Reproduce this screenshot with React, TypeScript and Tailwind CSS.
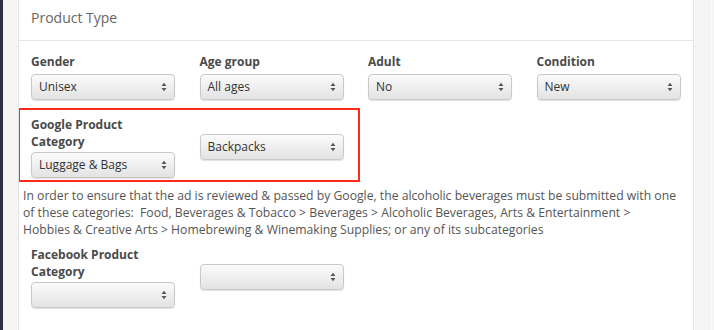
import type { ReactNode } from 'react'

const font = { fontFamily: '"Open Sans", "Liberation Sans", sans-serif' }

function Select({ value }: { value?: string }) {
  return (
    <div className="relative flex h-[26px] w-[144px] shrink-0 items-center rounded-[4px] border border-[#c9c9c9] bg-linear-to-b from-[#fbfbfb] to-[#e3e3e3] pl-[7px] text-[12px] text-[#333] shadow-[0_1px_1px_rgba(0,0,0,0.12)]">
      <span>{value}</span>
      <svg className="absolute right-[7px] top-1/2 -translate-y-1/2" width="6" height="10" viewBox="0 0 6 10">
        <path d="M3 0.8 L5.4 4 L0.6 4 Z" fill="#555" />
        <path d="M3 9.2 L5.4 6 L0.6 6 Z" fill="#555" />
      </svg>
    </div>
  )
}

function Field({ label, children }: { label: ReactNode; children: ReactNode }) {
  return (
    <div className="flex w-[168.5px] shrink-0 flex-col">
      <div className="mb-[2px] text-[12px] font-bold leading-[17px] text-[#4a4a4a]">{label}</div>
      {children}
    </div>
  )
}

export default function App() {
  return (
    <div className="flex h-[330px] w-[714px] overflow-hidden bg-[#f5f5f5]" style={font}>
      <div className="w-[3px] shrink-0 bg-[#2c3040]" />
      <div className="w-[15px] shrink-0" />
      <div className="flex w-[676px] shrink-0 flex-col overflow-hidden border-x border-[#e3e3e3] bg-white">
        <div className="flex h-[41px] shrink-0 items-center border-b border-[#e6e6e6] pb-[6px] pl-[12px] text-[14px] text-[#666]">
          Product Type
        </div>
        <div className="flex flex-col pl-[12px] pt-[12px]">
          <div className="flex">
            <Field label="Gender">
              <div className="mt-[2px]">
                <Select value="Unisex" />
              </div>
            </Field>
            <Field label="Age group">
              <div className="mt-[2px]">
                <Select value="All ages" />
              </div>
            </Field>
            <Field label="Adult">
              <div className="mt-[2px]">
                <Select value="No" />
              </div>
            </Field>
            <Field label="Condition">
              <div className="mt-[2px]">
                <Select value="New" />
              </div>
            </Field>
          </div>
          <div className="-ml-[13px] mt-[8px] flex w-[342px] items-center border-2 border-[#ff2a1a] pb-[2px] pl-[11px] pt-[6px]">
            <Field label={<>Google Product<br />Category</>}>
              <Select value="Luggage & Bags" />
            </Field>
            <Select value="Backpacks" />
          </div>
          <p className="-ml-[8px] mt-[5px] whitespace-nowrap text-[12.2px] leading-[17px] text-[#555]">
            In order to ensure that the ad is reviewed &amp; passed by Google, the alcoholic beverages must be submitted with one
            <br />
            of these categories:&nbsp; Food, Beverages &amp; Tobacco &gt; Beverages &gt; Alcoholic Beverages, Arts &amp; Entertainment &gt;
            <br />
            Hobbies &amp; Creative Arts &gt; Homebrewing &amp; Winemaking Supplies; or any of its subcategories
          </p>
          <div className="mt-[8px] flex items-center">
            <Field label={<>Facebook Product<br />Category</>}>
              <Select />
            </Field>
            <Select />
          </div>
        </div>
      </div>
      <div className="w-[18px] shrink-0 border-r border-[#fbfbfb]" />
    </div>
  )
}
